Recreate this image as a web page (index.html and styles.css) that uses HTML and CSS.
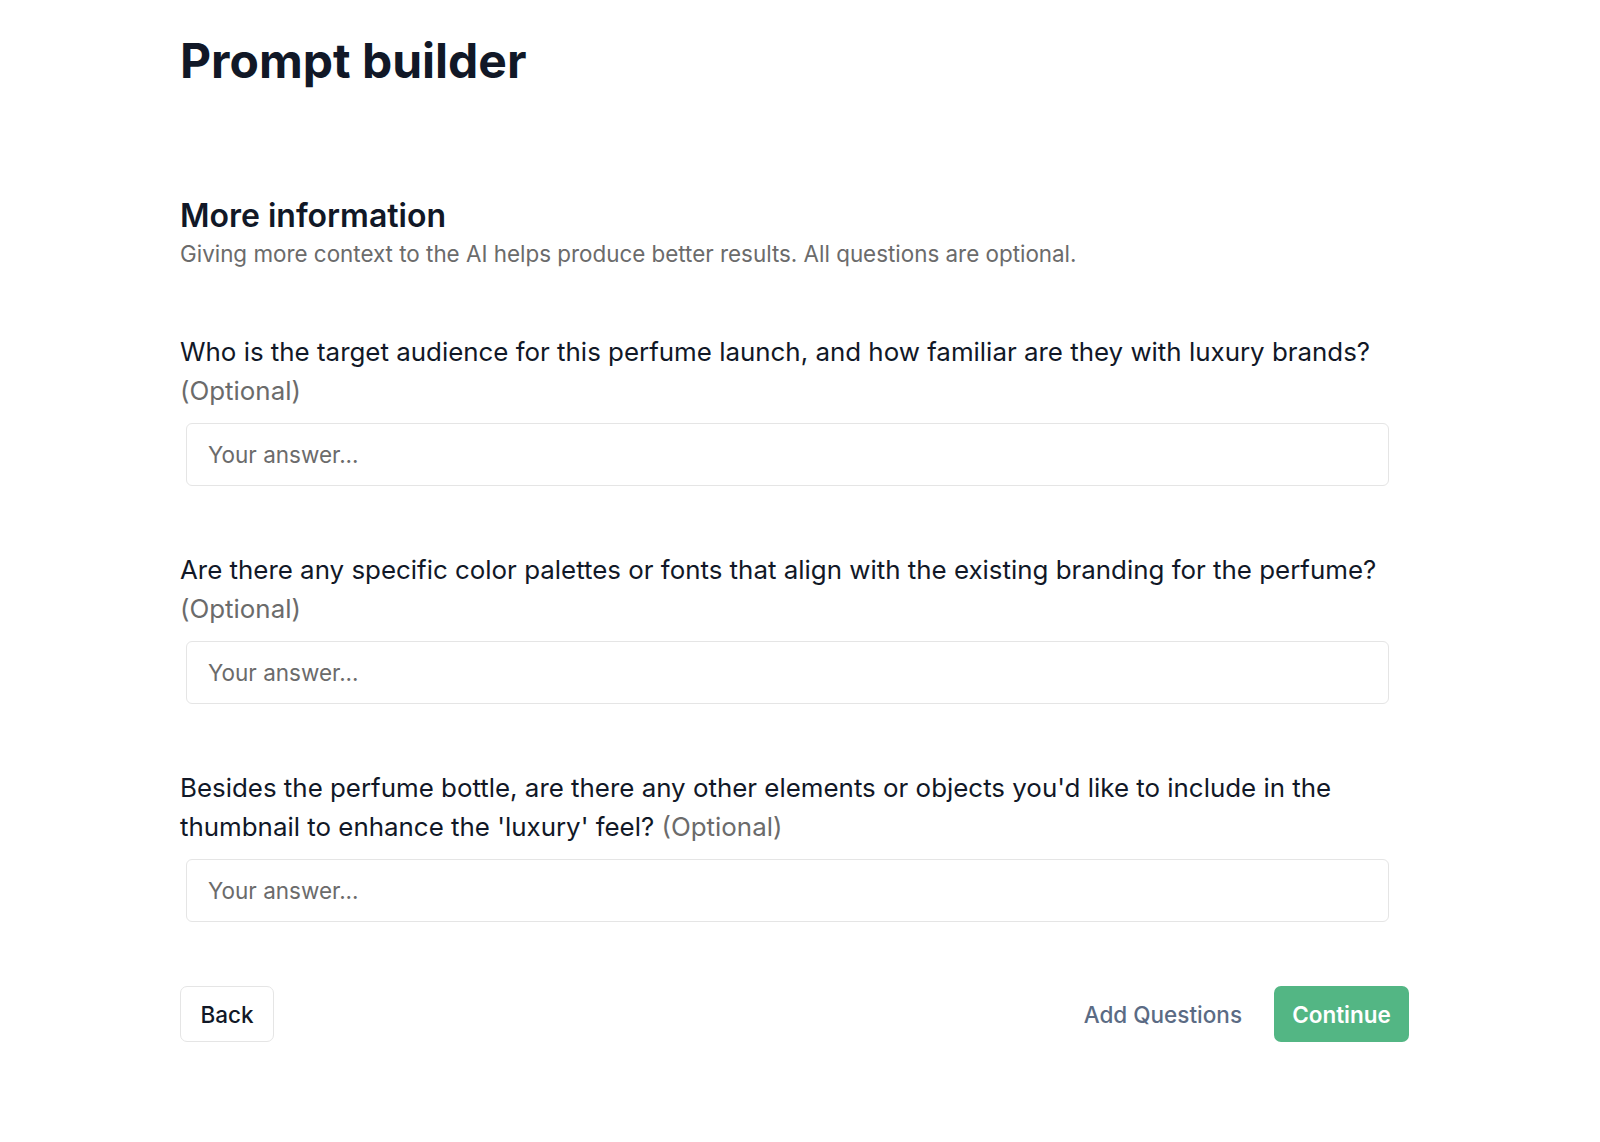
FILE: index.html
```html
<!DOCTYPE html>
<html lang="en">
<head>
<meta charset="utf-8">
<title>Prompt builder</title>
<link rel="stylesheet" href="styles.css">
</head>
<body>
<main class="page">
  <h1 class="title">Prompt builder</h1>

  <section class="intro">
    <h2 class="intro-title">More information</h2>
    <p class="intro-text">Giving more context to the AI helps produce better results. All questions are optional.</p>
  </section>

  <form class="questions">
    <div class="question">
      <label class="question-label" for="q1">Who is the target audience for this perfume launch, and how familiar are they with luxury brands? <span class="optional">(Optional)</span></label>
      <input class="answer" id="q1" type="text" placeholder="Your answer...">
    </div>
    <div class="question">
      <label class="question-label" for="q2">Are there any specific color palettes or fonts that align with the existing branding for the perfume? <span class="optional">(Optional)</span></label>
      <input class="answer" id="q2" type="text" placeholder="Your answer...">
    </div>
    <div class="question">
      <label class="question-label" for="q3">Besides the perfume bottle, are there any other elements or objects you'd like to include in the thumbnail to enhance the 'luxury' feel? <span class="optional">(Optional)</span></label>
      <input class="answer" id="q3" type="text" placeholder="Your answer...">
    </div>

    <div class="actions">
      <button type="button" class="btn btn-back">Back</button>
      <div class="actions-right">
        <button type="button" class="btn btn-link">Add Questions</button>
        <button type="button" class="btn btn-primary">Continue</button>
      </div>
    </div>
  </form>
</main>
</body>
</html>
```

FILE: styles.css
```css
* {
  box-sizing: border-box;
}

html, body {
  margin: 0;
  padding: 0;
  background: #ffffff;
}

body {
  font-family: Inter, "Noto Sans", "Liberation Sans", sans-serif;
  color: #111827;
}

.page {
  width: 1229px;
  margin-left: 180px;
  padding-top: 37px;
  padding-bottom: 60px;
}

.title {
  margin: 0;
  font-size: 48px;
  line-height: 48px;
  font-weight: 700;
  color: #111827;
}

.intro {
  margin-top: 111px;
}

.intro-title {
  margin: 0;
  font-size: 32px;
  line-height: 40px;
  font-weight: 600;
  color: #111827;
}

.intro-text {
  margin: 3px 0 0;
  font-size: 22.4px;
  line-height: 30px;
  color: #6b6b6b;
}

.questions {
  margin-top: 63px;
  display: flex;
  flex-direction: column;
}

.question {
  display: flex;
  flex-direction: column;
  margin-bottom: 64px;
}

.question-label {
  font-size: 25.9px;
  line-height: 39px;
  font-weight: 400;
  color: #111827;
}

.optional {
  color: #6b6b6b;
}

.answer {
  margin: 13px 20px 0 6px;
  height: 63px;
  padding: 0 21px;
  border: 1.5px solid #e5e5e5;
  border-radius: 6px;
  font-family: inherit;
  font-size: 22.5px;
  color: #111827;
  background: #ffffff;
  outline: none;
}

.answer::placeholder {
  color: #6b6b6b;
}

.actions {
  display: flex;
  justify-content: space-between;
  align-items: center;
}

.actions-right {
  display: flex;
  align-items: center;
  gap: 12px;
}

.btn {
  font-family: inherit;
  font-size: 22.5px;
  height: 56px;
  border-radius: 7px;
  cursor: pointer;
}

.btn-back {
  width: 94px;
  background: #ffffff;
  border: 1.5px solid #e5e5e5;
  color: #111827;
  font-weight: 500;
}

.btn-link {
  background: transparent;
  border: none;
  color: #5b6b84;
  font-weight: 500;
  padding: 0 20px;
}

.btn-primary {
  width: 135px;
  background: #53b684;
  border: none;
  color: #ffffff;
  font-weight: 600;
}
```
